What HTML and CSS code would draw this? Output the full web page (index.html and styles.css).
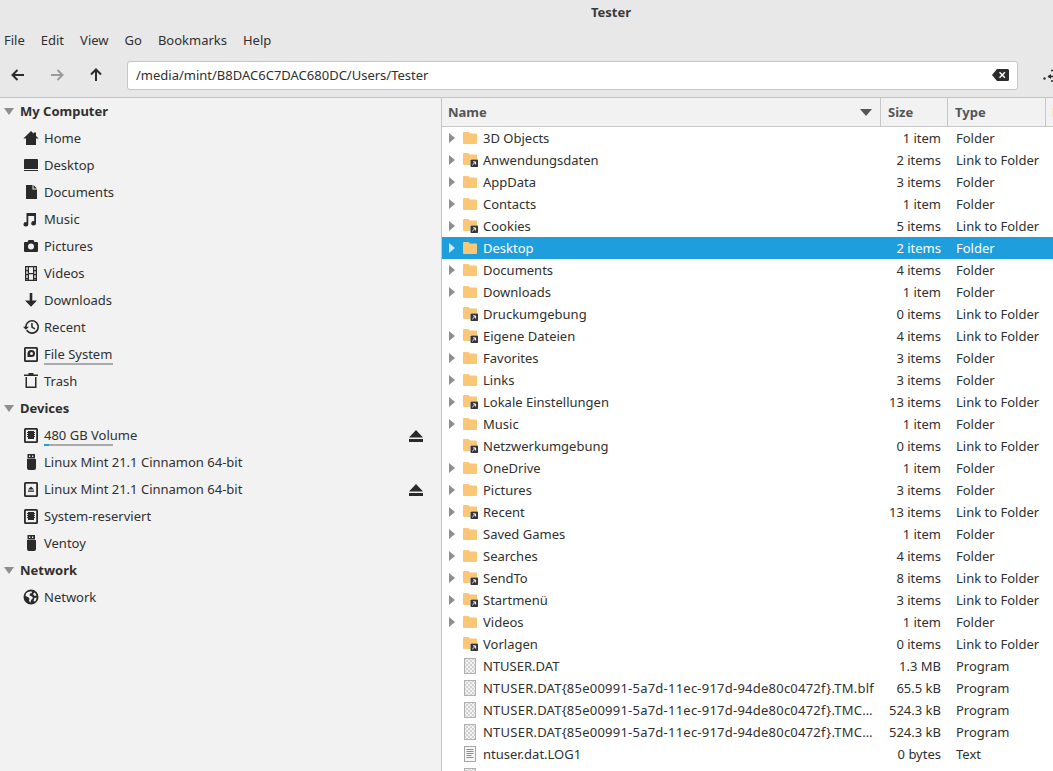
FILE: index.html
```html
<!DOCTYPE html>
<html lang="en">
<head>
<meta charset="utf-8">
<title>Tester</title>
<link rel="stylesheet" href="styles.css">
</head>
<body>
<svg class="sprite" width="0" height="0" aria-hidden="true">
<defs>
<pattern id="checker" width="4" height="4" patternUnits="userSpaceOnUse"><rect width="4" height="4" fill="#f2f2f2"/><rect width="2" height="2" fill="#d2d2d2"/><rect x="2" y="2" width="2" height="2" fill="#d2d2d2"/></pattern>
<symbol id="i-home" viewBox="0 0 16 16"><path d="M8 1 .4 8.500h2.600V15h10V8.500h2.600L13 6V2.500h-2.200v1.300z"/></symbol>
<symbol id="i-desktop" viewBox="0 0 16 16"><path d="M2 2h12a1 1 0 0 1 1 1v9H1V3a1 1 0 0 1 1-1zM1 13h14v1H1z"/></symbol>
<symbol id="i-doc" viewBox="0 0 16 16"><path d="M3 1h6.500v4.500H14V15H3zM10.500 1 14 4.500h-3.500z"/></symbol>
<symbol id="i-music" viewBox="0 0 16 16"><path d="M3.500 2h9.500v10.300a2.400 2.200 0 1 1-1.800-2.100V5H5.300v8.300a2.400 2.200 0 1 1-1.800-2.100z"/></symbol>
<symbol id="i-camera" viewBox="0 0 16 16"><path fill-rule="evenodd" d="M5.500 2h5l1 2H14a1 1 0 0 1 1 1v8a1 1 0 0 1-1 1H2a1 1 0 0 1-1-1V5a1 1 0 0 1 1-1h2.500zM8 5.500a3 3 0 1 0 0 6 3 3 0 0 0 0-6z"/></symbol>
<symbol id="i-film" viewBox="0 0 16 16"><path fill-rule="evenodd" d="M2 1h12v15H2zM3.300 2.300v2.700h1.400V2.300zM3.300 6.200V9h1.400V6.200zM3.300 10.300v2.700h1.400v-2.700zM3.300 14.200v.6h1.400v-.6zM6 2.300v5.700h4V2.300zM6 9.300v5.500h4V9.300zM11.300 2.300v2.700h1.400V2.300zM11.300 6.200V9h1.400V6.200zM11.300 10.300v2.700h1.400v-2.700zM11.300 14.200v.6h1.400v-.6z"/></symbol>
<symbol id="i-down" viewBox="0 0 16 16"><path d="M6.700 1h2.600v7.500H14L8 14.800 2 8.500h4.700z"/></symbol>
<symbol id="i-recent" viewBox="0 0 16 16"><path d="M9 1a7 7 0 1 1-6 10.600l1.400-.9a5.400 5.400 0 1 0-.8-3H6L2.900 10.800 0 7.700h2A7 7 0 0 1 9 1zM8.200 4h1.500v3.700l2.600 1.600-.8 1.200-3.300-2.100z"/></symbol>
<symbol id="i-fs" viewBox="0 0 16 16"><path fill-rule="evenodd" d="M2.500 1h11A1.500 1.500 0 0 1 15 2.500v12a1.500 1.500 0 0 1-1.500 1.500h-11A1.500 1.500 0 0 1 1 14.500v-12A1.500 1.500 0 0 1 2.500 1zM2.800 2.800v11.400h10.400V2.800zM8.500 4a3.500 3.500 0 0 1 0 7H4.500V7.500A3.500 3.500 0 0 1 8.500 4zm0 2a1.500 1.500 0 1 0 0 3 1.500 1.500 0 0 0 0-3z"/></symbol>
<symbol id="i-trash" viewBox="0 0 16 16"><path fill-rule="evenodd" d="M1 1.500h14V3H1zM5.500 0h5v1.500h-5zM2.500 4H13.500v11H2.500zM4 4v9.500h8V4z"/></symbol>
<symbol id="i-chip" viewBox="0 0 16 16"><path fill-rule="evenodd" d="M2.500 1h11A1.500 1.500 0 0 1 15 2.500v12a1.500 1.500 0 0 1-1.500 1.500h-11A1.500 1.500 0 0 1 1 14.500v-12A1.500 1.500 0 0 1 2.500 1zM2.800 2.800v11.400h10.400V2.800zM5 4h6v1h1v1h-1v1h1v1h-1v1h1v1h-1v2H5v-2H4v-1h1V8H4V7h1V6H4V5h1z"/></symbol>
<symbol id="i-usb" viewBox="0 0 16 16"><path fill-rule="evenodd" d="M4.500 0h7.500v4.500H4.500zM6 1.500v1.500h1.300V1.500zM9 1.500v1.500h1.300V1.500zM4 5h9v9a2 2 0 0 1-2 2H6a2 2 0 0 1-2-2z"/></symbol>
<symbol id="i-media" viewBox="0 0 16 16"><path fill-rule="evenodd" d="M2.500 1h11A1.500 1.500 0 0 1 15 2.500v12a1.500 1.500 0 0 1-1.500 1.500h-11A1.500 1.500 0 0 1 1 14.500v-12A1.500 1.500 0 0 1 2.500 1zM2.800 2.800v11.400h10.400V2.800zM8 5.500l3 3H5zM5 9.500h6v1.300H5z"/></symbol>
<symbol id="i-globe" viewBox="0 0 16 16"><path fill-rule="evenodd" d="M8 .5a7.500 7.500 0 1 1 0 15 7.500 7.500 0 0 1 0-15zM5 3 3 4.500 2.500 7l2.500 1 1.500 1.500L6 12l1.500 1.500.5-2.500 2-2-1-1.500L6.500 6.500 7 4.500l2-.5L8.500 2.300zM11.500 3.500 10 5l1.500 2 2-.5a5.800 5.800 0 0 0-2-3zM13.500 8.500l-2 .5-1 3 1.500.5a5.800 5.800 0 0 0 1.500-4z"/></symbol>
<symbol id="i-folder" viewBox="0 0 14 12"><path fill="#fbc675" d="M1 0h4.500L7 1.500h6a1 1 0 0 1 1 1V11a1 1 0 0 1-1 1H1a1 1 0 0 1-1-1V1a1 1 0 0 1 1-1z"/></symbol>
<symbol id="i-link" viewBox="0 0 15 14"><path fill="#fbc675" d="M1 0h4.500L7 1.500h6a1 1 0 0 1 1 1V12H1a1 1 0 0 1-1-1V1a1 1 0 0 1 1-1z"/><rect x="7" y="6" width="8" height="8" rx=".8" fill="#fff"/><rect x="7.500" y="6.500" width="7.500" height="7.500" rx=".8" fill="#333339"/><path d="M9.300 12.200 12 9.500M10 8.900h2.600v2.600" fill="none" stroke="#fff" stroke-width="1"/></symbol>
<symbol id="i-bin" viewBox="0 0 12 16"><rect x=".5" y=".5" width="11" height="15" fill="url(#checker)" stroke="#b0b0b0"/></symbol>
<symbol id="i-text" viewBox="0 0 12 16"><rect x=".5" y=".5" width="11" height="15" fill="#f6f6f6" stroke="#a6a6a6"/><path d="M2.500 3.500h7M2.500 5.500h7M2.500 7.500h7M2.500 9.500h5M2.500 11.500h7" stroke="#8c8c8c"/></symbol>
</defs>
</svg>
<div class="app">
  <header class="chrome">
    <div class="titlebar">Tester</div>
    <nav class="menubar"><span>File</span><span>Edit</span><span>View</span><span>Go</span><span>Bookmarks</span><span>Help</span></nav>
    <div class="toolbar">
      <div class="navbtns">
        <svg class="navicon" viewBox="0 0 16 16"><path d="M14 8H3M7.500 3 2.500 8l5 5" fill="none" stroke="#2b2b2b" stroke-width="2"/></svg>
        <svg class="navicon" viewBox="0 0 16 16"><path d="M2 8h11M8.500 3l5 5-5 5" fill="none" stroke="#9a9a9a" stroke-width="2"/></svg>
        <svg class="navicon" viewBox="0 0 16 16"><path d="M8 14V3M3 7.500l5-5 5 5" fill="none" stroke="#2b2b2b" stroke-width="2"/></svg>
      </div>
      <div class="pathbox">
        <span class="pathtext">/media/mint/B8DAC6C7DAC680DC/Users/Tester</span>
        <svg class="clearicon" viewBox="0 0 17 12"><path fill-rule="evenodd" d="M5 0h10.500A1.500 1.500 0 0 1 17 1.500v9a1.500 1.500 0 0 1-1.500 1.500H5L0 6zM8 2.800 7 3.800 9.200 6 7 8.200l1 1 2.200-2.200 2.200 2.200 1-1L11.200 6l2.200-2.200-1-1L10.200 5z" fill="#2b2b2b"/></svg>
      </div>
      <svg class="switchicon" viewBox="0 0 13 16"><path d="M8 3.500h5M5 9.500h8M8 14h5" stroke="#2b2b2b" stroke-width="1.500" fill="none"/><circle cx="1.500" cy="11.500" r="1.200" fill="#2b2b2b"/><path d="M8 7v5L4.500 9.500z" fill="#2b2b2b"/><path d="M10 1v5l3-2.500z" fill="#2b2b2b"/></svg>
    </div>
  </header>
  <main class="panes">
    <aside class="sidebar">
      <div class="sec"><i class="tri"></i>My Computer</div>
      <div class="place"><svg class="pic"><use href="#i-home"/></svg><span class="plabel">Home</span></div>
      <div class="place"><svg class="pic"><use href="#i-desktop"/></svg><span class="plabel">Desktop</span></div>
      <div class="place"><svg class="pic"><use href="#i-doc"/></svg><span class="plabel">Documents</span></div>
      <div class="place"><svg class="pic"><use href="#i-music"/></svg><span class="plabel">Music</span></div>
      <div class="place"><svg class="pic"><use href="#i-camera"/></svg><span class="plabel">Pictures</span></div>
      <div class="place"><svg class="pic"><use href="#i-film"/></svg><span class="plabel">Videos</span></div>
      <div class="place"><svg class="pic"><use href="#i-down"/></svg><span class="plabel">Downloads</span></div>
      <div class="place"><svg class="pic"><use href="#i-recent"/></svg><span class="plabel">Recent</span></div>
      <div class="place"><svg class="pic"><use href="#i-fs"/></svg><span class="plabel">File System<b class="usage"></b></span></div>
      <div class="place"><svg class="pic"><use href="#i-trash"/></svg><span class="plabel">Trash</span></div>
      <div class="sec"><i class="tri"></i>Devices</div>
      <div class="place"><svg class="pic"><use href="#i-chip"/></svg><span class="plabel">480 GB Volume<b class="usage"><b class="used"></b></b></span><svg class="eject" viewBox="0 0 14 12"><path d="M7 0l7 7.500H0zM0 9h14v3H0z"/></svg></div>
      <div class="place"><svg class="pic"><use href="#i-usb"/></svg><span class="plabel">Linux Mint 21.1 Cinnamon 64-bit</span></div>
      <div class="place"><svg class="pic"><use href="#i-media"/></svg><span class="plabel">Linux Mint 21.1 Cinnamon 64-bit</span><svg class="eject" viewBox="0 0 14 12"><path d="M7 0l7 7.500H0zM0 9h14v3H0z"/></svg></div>
      <div class="place"><svg class="pic"><use href="#i-chip"/></svg><span class="plabel">System-reserviert</span></div>
      <div class="place"><svg class="pic"><use href="#i-usb"/></svg><span class="plabel">Ventoy</span></div>
      <div class="sec"><i class="tri"></i>Network</div>
      <div class="place"><svg class="pic"><use href="#i-globe"/></svg><span class="plabel">Network</span></div>
    </aside>
    <section class="list">
      <div class="lhead">
        <div class="hname">Name<i class="sort"></i></div>
        <div class="hsize">Size</div>
        <div class="htype">Type</div>
        <div class="hdate">Date Modified</div>
      </div>
      <div class="row"><i class="exp"></i><svg class="fic"><use href="#i-folder"/></svg><span class="n">3D Objects</span><span class="s">1 item</span><span class="t">Folder</span></div>
      <div class="row"><i class="exp"></i><svg class="lnk"><use href="#i-link"/></svg><span class="n">Anwendungsdaten</span><span class="s">2 items</span><span class="t">Link to Folder</span></div>
      <div class="row"><i class="exp"></i><svg class="fic"><use href="#i-folder"/></svg><span class="n">AppData</span><span class="s">3 items</span><span class="t">Folder</span></div>
      <div class="row"><i class="exp"></i><svg class="fic"><use href="#i-folder"/></svg><span class="n">Contacts</span><span class="s">1 item</span><span class="t">Folder</span></div>
      <div class="row"><i class="exp"></i><svg class="lnk"><use href="#i-link"/></svg><span class="n">Cookies</span><span class="s">5 items</span><span class="t">Link to Folder</span></div>
      <div class="row sel"><i class="exp"></i><svg class="fic"><use href="#i-folder"/></svg><span class="n">Desktop</span><span class="s">2 items</span><span class="t">Folder</span></div>
      <div class="row"><i class="exp"></i><svg class="fic"><use href="#i-folder"/></svg><span class="n">Documents</span><span class="s">4 items</span><span class="t">Folder</span></div>
      <div class="row"><i class="exp"></i><svg class="fic"><use href="#i-folder"/></svg><span class="n">Downloads</span><span class="s">1 item</span><span class="t">Folder</span></div>
      <div class="row"><i class="noexp"></i><svg class="lnk"><use href="#i-link"/></svg><span class="n">Druckumgebung</span><span class="s">0 items</span><span class="t">Link to Folder</span></div>
      <div class="row"><i class="exp"></i><svg class="lnk"><use href="#i-link"/></svg><span class="n">Eigene Dateien</span><span class="s">4 items</span><span class="t">Link to Folder</span></div>
      <div class="row"><i class="exp"></i><svg class="fic"><use href="#i-folder"/></svg><span class="n">Favorites</span><span class="s">3 items</span><span class="t">Folder</span></div>
      <div class="row"><i class="exp"></i><svg class="fic"><use href="#i-folder"/></svg><span class="n">Links</span><span class="s">3 items</span><span class="t">Folder</span></div>
      <div class="row"><i class="exp"></i><svg class="lnk"><use href="#i-link"/></svg><span class="n">Lokale Einstellungen</span><span class="s">13 items</span><span class="t">Link to Folder</span></div>
      <div class="row"><i class="exp"></i><svg class="fic"><use href="#i-folder"/></svg><span class="n">Music</span><span class="s">1 item</span><span class="t">Folder</span></div>
      <div class="row"><i class="noexp"></i><svg class="lnk"><use href="#i-link"/></svg><span class="n">Netzwerkumgebung</span><span class="s">0 items</span><span class="t">Link to Folder</span></div>
      <div class="row"><i class="exp"></i><svg class="fic"><use href="#i-folder"/></svg><span class="n">OneDrive</span><span class="s">1 item</span><span class="t">Folder</span></div>
      <div class="row"><i class="exp"></i><svg class="fic"><use href="#i-folder"/></svg><span class="n">Pictures</span><span class="s">3 items</span><span class="t">Folder</span></div>
      <div class="row"><i class="exp"></i><svg class="lnk"><use href="#i-link"/></svg><span class="n">Recent</span><span class="s">13 items</span><span class="t">Link to Folder</span></div>
      <div class="row"><i class="exp"></i><svg class="fic"><use href="#i-folder"/></svg><span class="n">Saved Games</span><span class="s">1 item</span><span class="t">Folder</span></div>
      <div class="row"><i class="exp"></i><svg class="fic"><use href="#i-folder"/></svg><span class="n">Searches</span><span class="s">4 items</span><span class="t">Folder</span></div>
      <div class="row"><i class="exp"></i><svg class="lnk"><use href="#i-link"/></svg><span class="n">SendTo</span><span class="s">8 items</span><span class="t">Link to Folder</span></div>
      <div class="row"><i class="exp"></i><svg class="lnk"><use href="#i-link"/></svg><span class="n">Startmenü</span><span class="s">3 items</span><span class="t">Link to Folder</span></div>
      <div class="row"><i class="exp"></i><svg class="fic"><use href="#i-folder"/></svg><span class="n">Videos</span><span class="s">1 item</span><span class="t">Folder</span></div>
      <div class="row"><i class="noexp"></i><svg class="lnk"><use href="#i-link"/></svg><span class="n">Vorlagen</span><span class="s">0 items</span><span class="t">Link to Folder</span></div>
      <div class="row"><i class="noexp"></i><svg class="fil"><use href="#i-bin"/></svg><span class="n">NTUSER.DAT</span><span class="s">1.3 MB</span><span class="t">Program</span></div>
      <div class="row"><i class="noexp"></i><svg class="fil"><use href="#i-bin"/></svg><span class="n long">NTUSER.DAT{85e00991-5a7d-11ec-917d-94de80c0472f}.TM.blf</span><span class="s">65.5 kB</span><span class="t">Program</span></div>
      <div class="row"><i class="noexp"></i><svg class="fil"><use href="#i-bin"/></svg><span class="n long">NTUSER.DAT{85e00991-5a7d-11ec-917d-94de80c0472f}.TMC…</span><span class="s">524.3 kB</span><span class="t">Program</span></div>
      <div class="row"><i class="noexp"></i><svg class="fil"><use href="#i-bin"/></svg><span class="n long">NTUSER.DAT{85e00991-5a7d-11ec-917d-94de80c0472f}.TMC…</span><span class="s">524.3 kB</span><span class="t">Program</span></div>
      <div class="row"><i class="noexp"></i><svg class="fil"><use href="#i-text"/></svg><span class="n">ntuser.dat.LOG1</span><span class="s">0 bytes</span><span class="t">Text</span></div>
      <div class="row"><i class="noexp"></i><svg class="fil"><use href="#i-bin"/></svg><span class="n">ntuser.dat.LOG2</span><span class="s">0 bytes</span><span class="t">Text</span></div>
    </section>
  </main>
</div>
</body>
</html>
```

FILE: styles.css
```css
* { box-sizing: border-box; }
html, body { margin: 0; height: 100%; overflow: hidden; }
body { font-family: "Noto Sans", "Open Sans", sans-serif; font-size: 13px; color: #303030; background: #e8e8e8; }
.sprite { position: absolute; }
.app { display: flex; flex-direction: column; height: 771px; width: 1053px; overflow: hidden; }

.chrome { background: #e8e8e8; height: 98px; flex: none; border-bottom: 1px solid #c4c4c4; }
.titlebar { height: 27px; line-height: 25px; text-align: center; font-weight: 700; color: #3a3a3a; padding-left: 169px; }
.menubar { height: 25px; display: flex; align-items: center; gap: 16px; padding-left: 4px; }
.toolbar { height: 45px; display: flex; align-items: center; padding: 1px 0 0 10px; }
.navbtns { display: flex; gap: 23px; width: 117px; flex: none; }
.navicon { width: 16px; height: 16px; display: block; }
.pathbox { width: 891px; height: 29px; flex: none; background: #fff; border: 1px solid #c6c6c6; border-radius: 3px; display: flex; align-items: center; justify-content: space-between; padding: 0 8px; }
.clearicon { width: 17px; height: 12px; }
.switchicon { width: 13px; height: 16px; margin-left: 25px; flex: none; }

.panes { flex: 1; display: flex; min-height: 0; }
.sidebar { width: 442px; flex: none; background: #f2f2f2; border-right: 1px solid #c4c4c4; }
.sec { height: 27px; display: flex; align-items: center; font-weight: 700; padding: 0 0 2px 4px; gap: 6px; }
.tri { width: 0; height: 0; margin-top: 2px; border-left: 5.500px solid transparent; border-right: 5.500px solid transparent; border-top: 7px solid #8e8e8e; }
.place { height: 27px; display: flex; align-items: center; padding-left: 23px; position: relative; }
.pic { width: 16px; height: 16px; fill: #2a2a2a; flex: none; margin: -1px 5px 0 0; }
.plabel { position: relative; line-height: 27px; white-space: nowrap; }
.usage { position: absolute; left: 0; width: 69px; bottom: 3px; height: 2px; background: #a9a9a9; display: block; }
.used { display: block; width: 5px; height: 2px; background: #1f9ede; }
.eject { position: absolute; left: 409px; top: 8px; width: 14px; height: 12px; fill: #2a2a2a; }

.list { flex: 1; min-width: 0; background: #fff; overflow: hidden; }
.lhead { height: 29px; display: flex; background: #f2f2f2; border-bottom: 1px solid #c8c8c8; font-weight: 700; color: #555; white-space: nowrap; }
.lhead > div { display: flex; align-items: center; padding-left: 7px; border-right: 1px solid #c8c8c8; flex: none; position: relative; }
.lhead > .hname { width: 439px; padding-left: 6px; }
.hsize { width: 67px; }
.htype { width: 98px; }
.lhead > .hdate { width: 120px; border-right: 0; padding-left: 6px; }
.sort { position: absolute; right: 8px; top: 11px; width: 0; height: 0; border-left: 6px solid transparent; border-right: 6px solid transparent; border-top: 7px solid #555; }

.row { height: 22px; display: flex; align-items: center; white-space: nowrap; padding-left: 7px; }
.exp { width: 0; height: 0; flex: none; border-top: 5.500px solid transparent; border-bottom: 5.500px solid transparent; border-left: 6px solid #8e8e8e; margin-right: 8px; }
.noexp { width: 14px; flex: none; }
.fic { width: 14px; height: 12px; flex: none; margin-right: 6px; }
.lnk { width: 15px; height: 14px; flex: none; margin-right: 5px; }
.fil { width: 12px; height: 16px; flex: none; margin: 0 7px 0 1px; }
.n { width: 398px; flex: none; overflow: hidden; }
.long { letter-spacing: .23px; }
.s { width: 60px; flex: none; text-align: right; }
.t { margin-left: 15px; }
.sel { background: #1f9ede; color: #fff; }
.sel .exp { border-left-color: #cfe9f8; }
```
